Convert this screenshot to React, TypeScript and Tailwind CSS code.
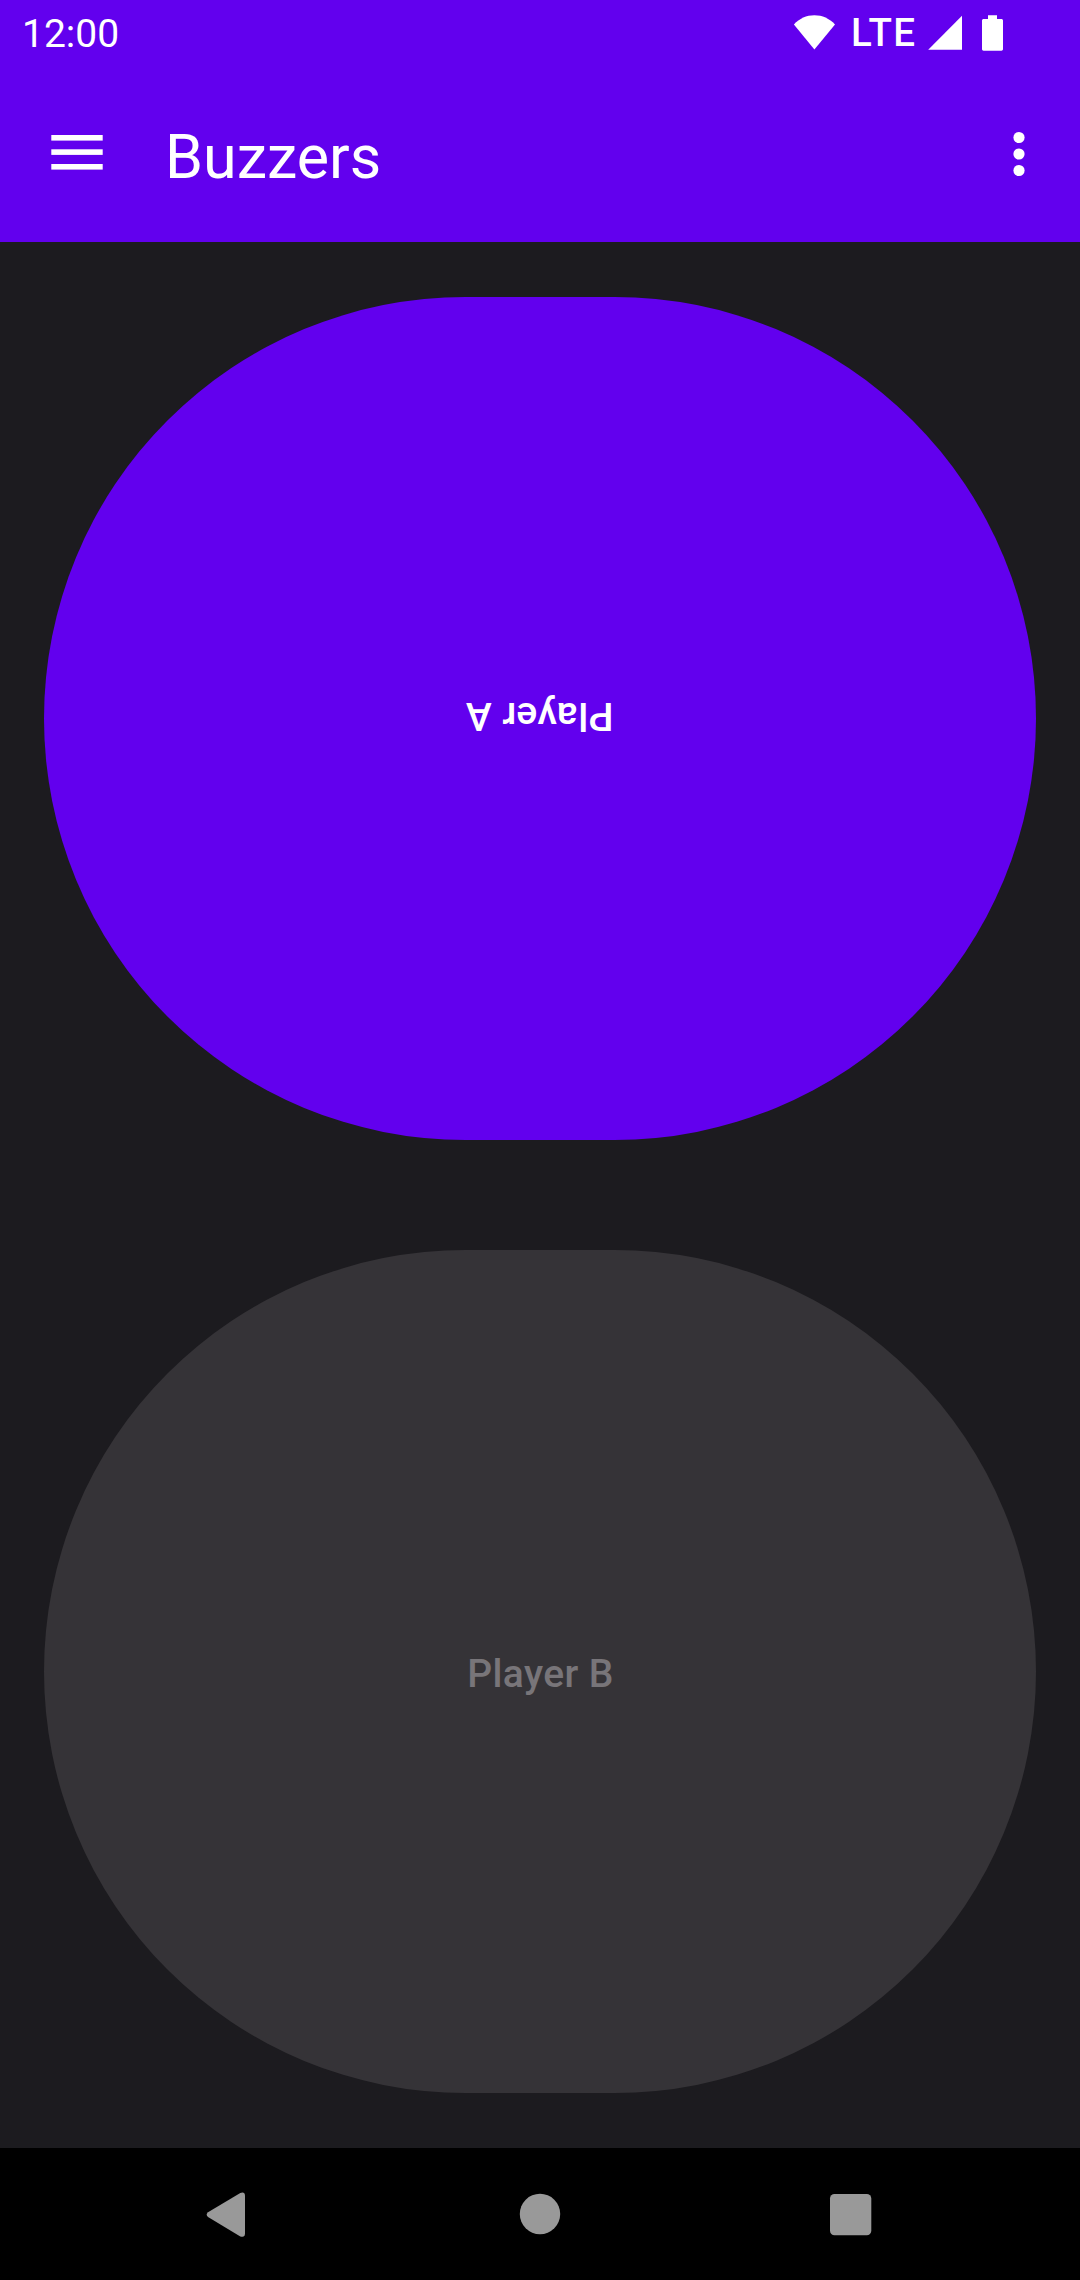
function WifiIcon() {
  return (
    <svg className="h-[66px] w-[42px]" viewBox="0 0 42 66" fill="#fff">
      <path d="M0.9 24.5C6.5 18.3 13.4 15.2 21.4 15.2S36.3 18.3 42 24.5L21.4 49.4Z" />
    </svg>
  );
}

function SignalIcon() {
  return (
    <svg className="h-[66px] w-[35px]" viewBox="0 0 35 66" fill="#fff">
      <path d="M0.2 49.7H34V15.8Z" />
    </svg>
  );
}

function BatteryIcon() {
  return (
    <svg className="h-[66px] w-[21px]" viewBox="0 0 21 66" fill="#fff">
      <path d="M6 15.2h9V19h4.4c.9 0 1.6.7 1.6 1.6v28.5c0 .9-.7 1.6-1.6 1.6H1.6C.7 50.7 0 50 0 49.1V20.6C0 19.7.7 19 1.6 19H6Z" />
    </svg>
  );
}

function StatusBar() {
  return (
    <div className="flex h-[66px] items-center pl-[22px] pr-[77px] leading-[66px]">
      <span className="translate-y-px text-[39px]">12:00</span>
      <div className="ml-auto flex items-center">
        <WifiIcon />
        <span className="ml-[16px] w-[77px] text-[38.5px] font-medium tracking-[1.4px]">LTE</span>
        <SignalIcon />
        <span className="w-[19px]" />
        <BatteryIcon />
      </div>
    </div>
  );
}

function AppBar() {
  return (
    <header className="flex h-[176px] items-center pl-[44px] pr-[28px]">
      <button aria-label="Open navigation" className="h-[66px] w-[66px]">
        <svg className="h-[66px] w-[66px]" viewBox="44 121 66 66" fill="#fff">
          <rect x="51.3" y="135" width="51.4" height="5.6" />
          <rect x="51.3" y="149.3" width="51.4" height="5.6" />
          <rect x="51.3" y="164" width="51.4" height="5.6" />
        </svg>
      </button>
      <h1 className="ml-[55px] mt-[6px] text-[61px] leading-[72px]">Buzzers</h1>
      <button aria-label="More options" className="ml-auto h-[66px] w-[66px]">
        <svg className="h-[66px] w-[66px]" viewBox="0 0 66 66" fill="#fff">
          <circle cx="33" cy="16.5" r="5.6" />
          <circle cx="33" cy="33" r="5.6" />
          <circle cx="33" cy="49.5" r="5.6" />
        </svg>
      </button>
    </header>
  );
}

function NavigationBar() {
  return (
    <nav className="flex h-[132px] items-center bg-black">
      <svg className="h-[132px] w-full" viewBox="0 2148 1080 132" fill="#999">
        <path d="M240.3 2192.9 208 2212.2Q205.3 2214.5 208 2216.9L240.3 2236.4Q244.8 2238.1 245 2233.6V2195.6Q244.8 2191.3 240.3 2192.9Z" />
        <circle cx="540" cy="2214" r="20.2" />
        <rect x="830" y="2194" width="41.3" height="41.3" rx="4.5" />
      </svg>
    </nav>
  );
}

export default function App() {
  return (
    <div className="flex h-[2280px] w-[1080px] flex-col overflow-hidden bg-[#1c1b1f] font-['Roboto',sans-serif] text-white">
      <div className="bg-[#6200ee]">
        <StatusBar />
        <AppBar />
      </div>
      <main className="flex flex-1 flex-col gap-[110px] px-[44px] py-[55px]">
        <button className="flex flex-1 rotate-180 items-center justify-center rounded-full bg-[#6200ee] text-[39px] font-medium tracking-[0.4px] text-white">
          <span className="translate-x-[0.5px] translate-y-[3px]">Player A</span>
        </button>
        <button
          disabled
          className="flex flex-1 items-center justify-center rounded-full bg-[#353337] text-[39px] font-medium tracking-[0.4px] text-[#787579]"
        >
          <span className="translate-x-[0.5px] translate-y-[3px]">Player B</span>
        </button>
      </main>
      <NavigationBar />
    </div>
  );
}
